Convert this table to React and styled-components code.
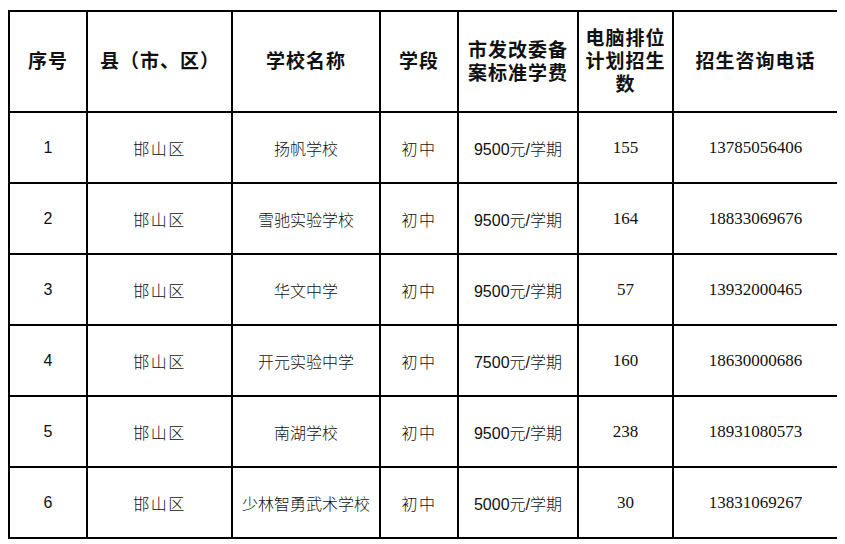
import React from 'react'
import styled, { createGlobalStyle } from 'styled-components'

const GlobalStyle = createGlobalStyle`
  body {
    margin: 10px 8px 8px 8px;
    background: #fff;
    color: #111;
  }
`

const Table = styled.table`
  border-collapse: collapse;
  table-layout: fixed;
  width: 829px;
  border: 2px solid #000;
`

const HeadCell = styled.th`
  border: 2px solid #000;
  height: 99px;
  padding: 0 4px;
  text-align: ${p => (p.$left ? 'left' : 'center')};
  padding-left: ${p => (p.$left ? '12px' : '4px')};
  font-family: "Liberation Serif", "Noto Sans CJK SC", serif;
  font-weight: bold;
  font-size: 19px;
  line-height: 23px;
  letter-spacing: 1px;
`

const Cell = styled.td`
  border: 2px solid #000;
  height: 69px;
  padding: 0;
  text-align: center;
  font-family: ${p =>
    p.$kind === 'serif'
      ? '"Liberation Serif", "Noto Sans CJK SC", serif'
      : '"Liberation Sans", "Noto Sans CJK SC", sans-serif'};
  font-size: ${p => (p.$kind === 'serif' ? '17px' : '16px')};
  font-weight: 300;
  letter-spacing: ${p => (p.$wide ? '1.5px' : '0')};
`

const widths = [78, 145, 148, 78, 120, 95, 165]

const rows = [
  ['1', '邯山区', '扬帆学校', '初中', '9500元/学期', '155', '13785056406'],
  ['2', '邯山区', '雪驰实验学校', '初中', '9500元/学期', '164', '18833069676'],
  ['3', '邯山区', '华文中学', '初中', '9500元/学期', '57', '13932000465'],
  ['4', '邯山区', '开元实验中学', '初中', '7500元/学期', '160', '18630000686'],
  ['5', '邯山区', '南湖学校', '初中', '9500元/学期', '238', '18931080573'],
  ['6', '邯山区', '少林智勇武术学校', '初中', '5000元/学期', '30', '13831069267'],
]

export default function App() {
  return (
    <>
      <GlobalStyle />
      <Table>
        <colgroup>
          {widths.map((w, i) => (
            <col key={i} style={{ width: w }} />
          ))}
        </colgroup>
        <thead>
          <tr>
            <HeadCell>序号</HeadCell>
            <HeadCell $left>县（市、区）</HeadCell>
            <HeadCell>学校名称</HeadCell>
            <HeadCell>学段</HeadCell>
            <HeadCell>市发改委备<br />案标准学费</HeadCell>
            <HeadCell>电脑排位<br />计划招生<br />数</HeadCell>
            <HeadCell>招生咨询电话</HeadCell>
          </tr>
        </thead>
        <tbody>
          {rows.map(r => (
            <tr key={r[0]}>
              <Cell>{r[0]}</Cell>
              <Cell $wide>{r[1]}</Cell>
              <Cell>{r[2]}</Cell>
              <Cell $wide>{r[3]}</Cell>
              <Cell>{r[4]}</Cell>
              <Cell $kind="serif">{r[5]}</Cell>
              <Cell $kind="serif">{r[6]}</Cell>
            </tr>
          ))}
        </tbody>
      </Table>
    </>
  )
}
